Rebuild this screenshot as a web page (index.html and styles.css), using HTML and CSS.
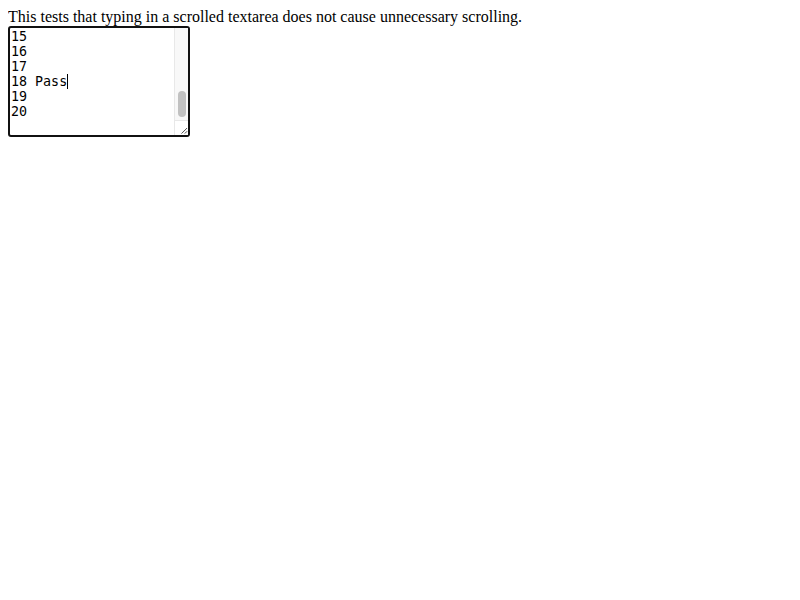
FILE: index.html
```html
<!DOCTYPE html>
<html>
<head>
<meta charset="utf-8">
<link rel="stylesheet" href="styles.css">
</head>
<body class="page">
<div class="intro">This tests that typing in a scrolled textarea does not cause unnecessary scrolling.</div>
<div class="box">
  <div class="content">
    <div class="line">15</div>
    <div class="line">16</div>
    <div class="line">17</div>
    <div class="line">18 Pass<span class="caret"></span></div>
    <div class="line">19</div>
    <div class="line">20</div>
  </div>
  <div class="scrollbar">
    <div class="track"><div class="thumb"></div></div>
    <div class="resizer">
      <svg width="14" height="14" viewBox="0 0 14 14"><path d="M13 7 L7 13 M13 10.5 L10.5 13" stroke="#444" stroke-width="1" fill="none"/></svg>
    </div>
  </div>
</div>
</body>
</html>
```
FILE: styles.css
```css
.page {
  margin: 8px;
  font-family: "Liberation Serif", serif;
  font-size: 16px;
}
.intro {
  line-height: 18px;
}
.box {
  width: 182px;
  height: 111px;
  box-sizing: border-box;
  border: 2px solid #111;
  border-radius: 3px;
  display: flex;
  background: #fff;
}
.content {
  flex: 1;
  padding: 1px 0 0 1px;
  font-family: "DejaVu Sans Mono", monospace;
  font-size: 13.333px;
  line-height: 15px;
  color: #000;
}
.line {
  height: 15px;
  white-space: pre;
}
.caret {
  display: inline-block;
  width: 1px;
  height: 15px;
  background: #000;
  vertical-align: top;
}
.scrollbar {
  width: 13px;
  border-left: 1px solid #e8e8e8;
  background: #f8f8f8;
  display: flex;
  flex-direction: column;
}
.track {
  flex: 1;
  display: flex;
  flex-direction: column;
  justify-content: flex-end;
  align-items: center;
  padding-bottom: 3px;
}
.thumb {
  width: 8px;
  height: 26px;
  border-radius: 4px;
  background: #c1c1c1;
}
.resizer {
  height: 14px;
  border-top: 1px solid #e8e8e8;
  background: #fff;
  display: flex;
}
```
